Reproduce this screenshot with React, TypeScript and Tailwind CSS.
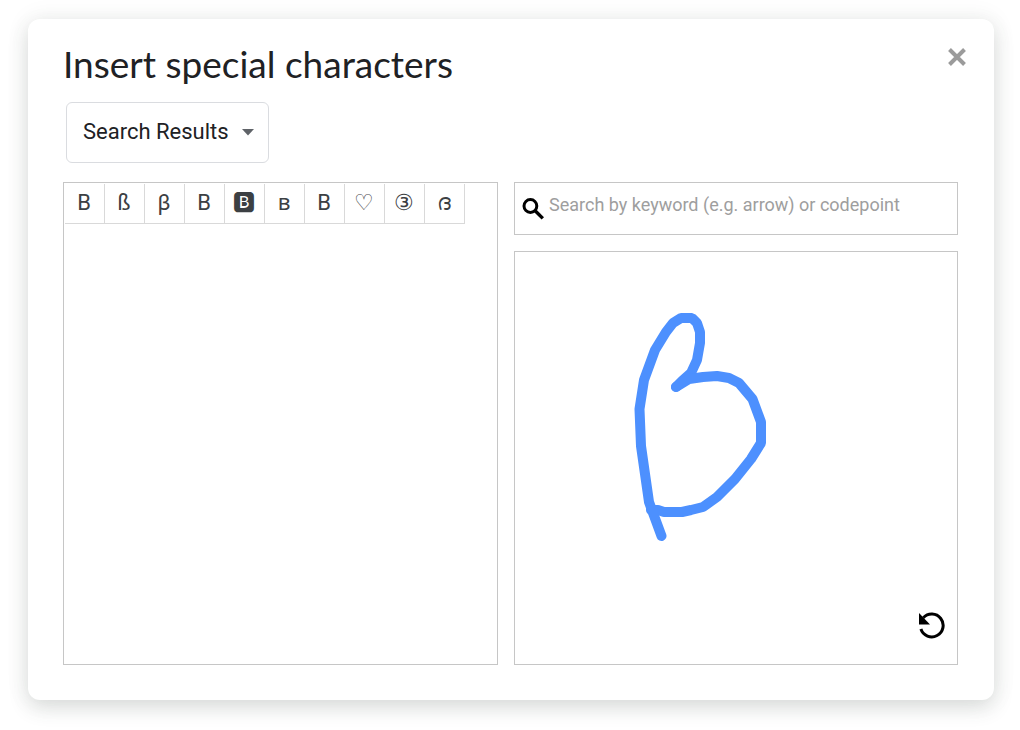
import { useState } from "react";

const textFont = "font-[Roboto,'Noto_Sans',sans-serif]";
const squaredFont = "font-[Roboto,'Noto_Sans','Noto_Sans_CJK_JP',sans-serif]";

const characters = [
  { glyph: "B", name: "Latin capital letter B", font: textFont },
  { glyph: "ß", name: "Latin small letter sharp S", font: textFont },
  { glyph: "β", name: "Greek small letter beta", font: textFont },
  { glyph: "В", name: "Cyrillic capital letter Ve", font: textFont },
  { glyph: "🅱", name: "Negative squared Latin capital letter B", font: squaredFont },
  { glyph: "ʙ", name: "Latin letter small capital B", font: textFont },
  { glyph: "Β", name: "Greek capital letter Beta", font: textFont },
  { glyph: "♡", name: "White heart suit", font: textFont },
  { glyph: "③", name: "Circled digit three", font: textFont },
  { glyph: "ദ", name: "Malayalam letter Da", font: textFont },
];

function CategorySelect() {
  return (
    <div className="relative ml-[3px] w-[203px]">
      <select
        aria-label="Category"
        className="h-[61px] w-full appearance-none rounded-md border border-[#dadce0] bg-white pb-[3px] pl-4 text-[22px] text-[#202124]"
      >
        <option>Search Results</option>
      </select>
      <svg
        viewBox="0 0 12 7"
        className="pointer-events-none absolute top-[27px] right-[15px] h-[7px] w-3 fill-[#5f6368]"
        aria-hidden="true"
      >
        <path d="M0 0h12L6 6.5z" />
      </svg>
    </div>
  );
}

function CharacterGrid() {
  return (
    <div className="flex flex-wrap content-start border border-[#c6c6c6] p-px">
      {characters.map((c) => (
        <button
          key={c.name}
          type="button"
          aria-label={c.name}
          className={`flex size-10 items-center justify-center border-r border-b border-[#d9d9d9] pr-px pb-0.5 text-[22px] leading-none text-[#3c4043] ${c.font}`}
        >
          {c.glyph}
        </button>
      ))}
    </div>
  );
}

function SearchBox() {
  const [query, setQuery] = useState("");
  return (
    <label className="flex h-[53px] items-center border border-[#c6c6c6] pl-[7px]">
      <svg viewBox="0 0 22 22" className="size-[22px] shrink-0" fill="none" stroke="#000" aria-hidden="true">
        <circle cx="8.4" cy="8" r="6.4" strokeWidth="3" />
        <path d="M12.9 12.5L20.8 20.4" strokeWidth="3.4" />
      </svg>
      <input
        type="text"
        aria-label="Search"
        value={query}
        onChange={(e) => setQuery(e.target.value)}
        placeholder="Search by keyword (e.g. arrow) or codepoint"
        className="ml-[5px] min-w-0 flex-1 pb-2 text-[18px] outline-none placeholder:text-[#9e9e9e]"
      />
    </label>
  );
}

function DrawingPad() {
  return (
    <div className="relative min-h-[414px] flex-1 border border-[#c6c6c6]">
      <svg
        viewBox="0 0 442 412"
        className="h-full w-full"
        fill="none"
        stroke="#4d90fe"
        strokeWidth="10"
        strokeLinecap="round"
        strokeLinejoin="bevel"
        role="img"
        aria-label="Drawn character"
      >
        <path d="M146.5 284L134 250L126 194L124.5 157L129 128L140 98L151 80L158 71L166 66H177L182 71L185 80V91L182 108L176 121L167 129L161 135" />
        <path d="M161 135L174 127L188 125L202 124L214 126L224 131L237.5 147L246 170V191L236 207L220 227L202 245L188 255L176 258L167 260H149L143 258H136" />
      </svg>
      <button type="button" aria-label="Clear drawing" className="absolute right-3 bottom-[25px]">
        <svg viewBox="0 0 27 27" className="size-[27px]" aria-hidden="true">
          <path d="M5.3 5.8A11.4 11.4 0 1 1 2.9 17" fill="none" stroke="#000" strokeWidth="3" />
          <path d="M1 1v11.5h11z" />
        </svg>
      </button>
    </div>
  );
}

export default function App() {
  return (
    <main className="bg-white pt-[19px] pr-[26px] pb-[30px] pl-7 font-[Roboto,'Noto_Sans',sans-serif]">
      <section
        role="dialog"
        aria-labelledby="dialog-title"
        className="rounded-xl bg-white pt-6 pr-9 pb-[35px] pl-[35px] shadow-[0_8px_20px_rgba(60,72,68,0.16),0_0_24px_rgba(60,72,68,0.08)]"
      >
        <header className="flex items-start justify-between">
          <h1 id="dialog-title" className="font-[Lato,sans-serif] text-[37px] leading-[42px] text-[#202124]">
            Insert special characters
          </h1>
          <button type="button" aria-label="Close" className="-mr-2 mt-[5px]">
            <svg viewBox="0 0 18 18" className="size-[18px]" stroke="#9b9b9b" strokeWidth="4" aria-hidden="true">
              <path d="M1.5 1.5L16.5 16.5M16.5 1.5L1.5 16.5" />
            </svg>
          </button>
        </header>
        <div className="mt-[17px]">
          <CategorySelect />
        </div>
        <div className="mt-[19px] grid grid-cols-[435fr_444fr] gap-4">
          <CharacterGrid />
          <div className="flex flex-col gap-4">
            <SearchBox />
            <DrawingPad />
          </div>
        </div>
      </section>
    </main>
  );
}
